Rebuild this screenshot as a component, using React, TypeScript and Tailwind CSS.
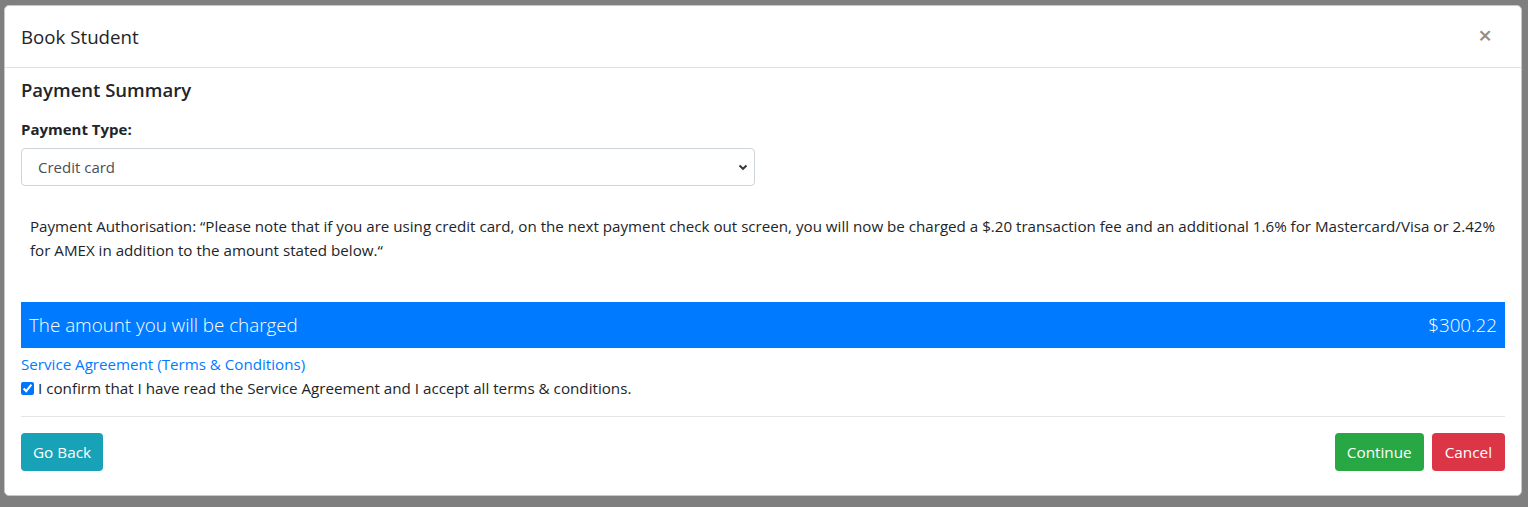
import React from "react";

export default function App() {
  const font = { fontFamily: '"Segoe UI", "Open Sans", "Noto Sans", sans-serif' };
  return (
    <div className="w-[1528px] h-[507px] bg-[#7f7f7f] overflow-hidden relative" style={font}>
      <div className="absolute left-[4px] top-[5px] w-[1518px] bg-white rounded-[5px] border border-[#c8c8c8] text-[#212529]">
        <div className="flex items-center justify-between h-[62px] px-4 border-b border-[#dee2e6]">
          <h5 className="text-[18.7px] leading-[30px] font-normal">Book Student</h5>
          <span className="text-[24px] font-semibold text-[#8f8f8f] mr-[13px] leading-none -mt-[3px]">×</span>
        </div>
        <div className="px-4 pt-[7px]">
          <h4 className="text-[18.5px] leading-[30px] font-semibold">Payment Summary</h4>
          <div className="mt-[13px] text-[15px] font-bold leading-[22px]">Payment Type:</div>
          <div className="mt-[8px] w-[734px] h-[38px] border border-[#ced4da] rounded-[4px] flex items-center justify-between pl-4 pr-[6px] text-[15px] text-[#495057]">
            <span>Credit card</span>
            <svg width="10" height="8" viewBox="0 0 10 8"><path d="M1.5 2.5 L5 5.8 L8.5 2.5" stroke="#343a40" strokeWidth="2" fill="none"/></svg>
          </div>
          <p className="mt-[28px] px-[9px] text-[15.15px] leading-[24px]">
            Payment Authorisation: “Please note that if you are using credit card, on the next payment check out screen, you will now be charged a $.20 transaction fee and an additional 1.6% for Mastercard/Visa or 2.42% for AMEX in addition to the amount stated below.“
          </p>
          <div className="mt-[40px] h-[46px] bg-[#007bff] text-white flex items-center justify-between px-[8px] text-[18.8px] font-light">
            <span>The amount you will be charged</span>
            <span>$300.22</span>
          </div>
          <div className="mt-[4px] text-[15.15px] leading-[24px] text-[#007bff]">Service Agreement (Terms &amp; Conditions)</div>
          <label className="flex items-center text-[15.2px] leading-[24px]">
            <input type="checkbox" defaultChecked className="w-[13px] h-[13px] mr-[4px] accent-[#0075ff]" />
            I confirm that I have read the Service Agreement and I accept all terms &amp; conditions.
          </label>
          <div className="mt-[16px] border-t border-[#e5e5e5]" />
          <div className="flex items-center justify-between pt-[16px] pb-[24px]">
            <button className="h-[38px] px-[12px] rounded-[4px] bg-[#17a2b8] text-white text-[15.3px]">Go Back</button>
            <div className="flex gap-[8px]">
              <button className="h-[38px] px-[12px] rounded-[4px] bg-[#28a745] text-white text-[15.3px]">Continue</button>
              <button className="h-[38px] px-[13px] rounded-[4px] bg-[#dc3545] text-white text-[15.3px]">Cancel</button>
            </div>
          </div>
        </div>
      </div>
    </div>
  );
}
